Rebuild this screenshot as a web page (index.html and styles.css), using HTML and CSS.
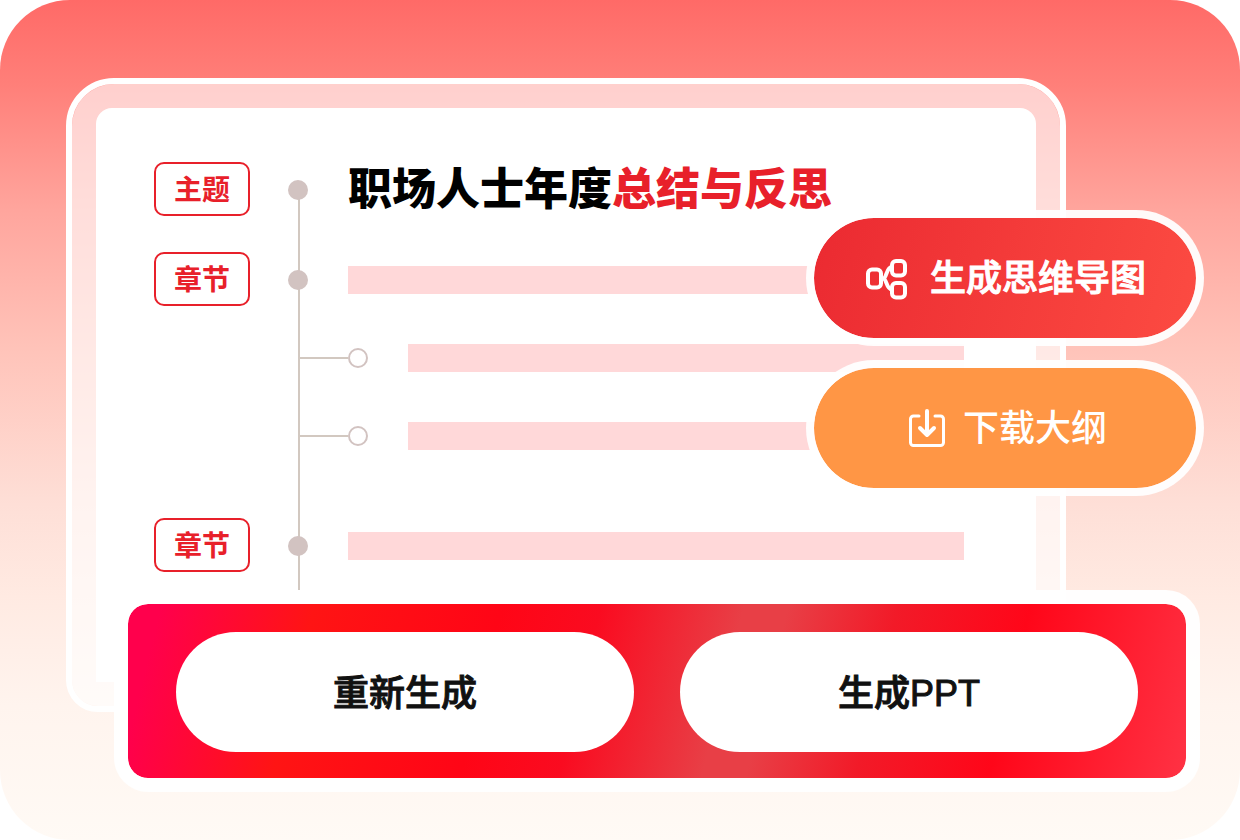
FILE: index.html
```html
<!DOCTYPE html>
<html lang="zh-CN">
  <head>
    <meta charset="UTF-8" />
    <meta name="viewport" content="width=device-width, initial-scale=1.0" />
    <title>职场人士年度总结与反思</title>
    <link rel="stylesheet" href="styles.css">
  </head>
  <body>
    <main class="stage">
      <section class="frame">
        <div class="sheet">
          <div class="outline">
            <div class="row">
              <span class="tag">主题</span>
              <span class="dot"></span>
              <h1>职场人士年度<em>总结与反思</em></h1>
            </div>
            <div class="row">
              <span class="tag">章节</span>
              <span class="dot"></span>
              <span class="bar"></span>
            </div>
            <div class="children">
              <div class="child">
                <span class="branch"></span>
                <span class="ring"></span>
                <span class="bar"></span>
              </div>
              <div class="child">
                <span class="branch"></span>
                <span class="ring"></span>
                <span class="bar"></span>
              </div>
            </div>
            <div class="row">
              <span class="tag">章节</span>
              <span class="dot"></span>
              <span class="bar"></span>
            </div>
          </div>
        </div>
      </section>

      <div class="actions">
        <button type="button" class="action mindmap">
          <svg width="42" height="42" viewBox="0 0 42 42" fill="none" stroke="#fff" stroke-width="4" aria-hidden="true">
            <rect x="4" y="12.5" width="13" height="18" rx="4" />
            <rect x="28" y="4" width="13" height="14.5" rx="4" />
            <rect x="28" y="26" width="13" height="14.5" rx="4" />
            <path d="M17 21.5h4M28 10c-6 0-5 11.500-9 11.500 4 0 3 11 9 11" />
          </svg>
          <span>生成思维导图</span>
        </button>
        <button type="button" class="action download">
          <svg width="42" height="42" viewBox="0 0 42 42" fill="none" stroke="#fff" stroke-width="3" stroke-linecap="round" stroke-linejoin="round" aria-hidden="true">
            <path d="M16 9h-5.500a3 3 0 0 0-3 3v23.500a3 3 0 0 0 3 3h27a3 3 0 0 0 3-3V12a3 3 0 0 0-3-3H32" />
            <path d="M24 4v24M17 21l7 7 7-7" stroke-width="4" />
          </svg>
          <span>下载大纲</span>
        </button>
      </div>

      <div class="toolbar">
        <button type="button">重新生成</button>
        <button type="button">生成PPT</button>
      </div>
    </main>
  </body>
</html>
```
FILE: styles.css
```css
* {
  box-sizing: border-box;
}
body {
  margin: 0;
  background: #fff;
  font-family: "Liberation Sans", "Noto Sans CJK SC", sans-serif;
}
button {
  font-family: inherit;
  font-size: 36px;
  font-weight: 500;
  -webkit-text-stroke: 1px currentColor;
  cursor: pointer;
}
.stage {
  position: relative;
  min-height: 100vh;
  padding: 78px 174px 48px 66px;
  border-radius: 70px;
  background: linear-gradient(
    180deg,
    #ff6a67 0%,
    #ff7f79 10%,
    #ffa59d 25%,
    #ffc4ba 42%,
    #fedfd7 60%,
    #ffeae2 71%,
    #fff4ee 84%,
    #fffaf5 100%
  );
}
.frame {
  padding: 24px;
  border: 6px solid #fff;
  border-radius: 48px 48px 32px 32px;
  background: rgba(255, 255, 255, 0.63);
  background-clip: padding-box;
}
.sheet {
  padding: 54px 72px 92px 58px;
  border-radius: 16px 16px 0 0;
  background: #fff;
}

/* outline tree */
.outline {
  position: relative;
  padding-bottom: 16px;
}
.outline::before {
  content: "";
  position: absolute;
  top: 30px;
  bottom: 0;
  left: 144px;
  width: 2px;
  background: #d2c8c0;
}
.row {
  display: flex;
  align-items: center;
  height: 56px;
}
.row + .row {
  margin-top: 34px;
}
.tag {
  align-self: flex-start;
  width: 96px;
  height: 54px;
  border: 2px solid #e8202a;
  border-radius: 10px;
  color: #e8202a;
  font-size: 28px;
  font-weight: bold;
  line-height: 54px;
  text-align: center;
}
.dot {
  z-index: 1;
  width: 20px;
  height: 20px;
  margin: 0 40px 0 38px;
  border-radius: 50%;
  background: #d2c3c1;
}
h1 {
  margin: 0;
  font-size: 44px;
  font-weight: 900;
  line-height: 54px;
  color: #000;
  white-space: nowrap;
}
h1 em {
  font-style: normal;
  color: #e8202a;
}
.bar {
  flex: 1;
  height: 28px;
  background: #ffd8d9;
}
.children {
  display: flex;
  flex-direction: column;
  gap: 50px;
  margin: 36px 0 68px 146px;
}
.child {
  display: flex;
  align-items: center;
}
.branch {
  width: 48px;
  height: 2px;
  background: #d2c8c0;
}
.ring {
  width: 20px;
  height: 20px;
  margin-right: 40px;
  border: 2px solid #d2c3c1;
  border-radius: 50%;
}

/* floating buttons */
.actions {
  position: absolute;
  top: 210px;
  right: 36px;
  display: flex;
  flex-direction: column;
  gap: 14px;
}
.action {
  display: flex;
  align-items: center;
  justify-content: center;
  gap: 24px;
  width: 398px;
  height: 136px;
  padding: 0;
  border: 8px solid rgba(255, 255, 255, 0.94);
  border-radius: 68px;
  color: #fff;
  background-clip: padding-box;
}
.action svg {
  overflow: visible;
}
.action span {
  padding-bottom: 6px;
}
.mindmap {
  background-image: linear-gradient(105deg, #eb2a31, #fc4b42);
}
.download {
  gap: 18px;
  background-color: #ff9645;
  -webkit-text-stroke: 0;
}

/* bottom bar */
.toolbar {
  position: relative;
  display: flex;
  gap: 46px;
  margin: -122px -134px 0 48px;
  padding: 28px 48px 26px;
  border: 14px solid rgba(255, 255, 255, 0.94);
  border-radius: 34px;
  background: linear-gradient(
    104deg,
    #ff004c 3%,
    #ff1414 17%,
    #ff0516 34%,
    #fa0b20 43%,
    #e83f46 56%,
    #e83f46 60%,
    #f21a28 70%,
    #ff0619 82%,
    #ff3244 100%
  );
  background-clip: padding-box;
}
.toolbar button {
  flex: 1;
  height: 120px;
  padding: 0 0 4px;
  border: 0;
  border-radius: 60px;
  color: #111;
  background: #fff;
}
```
